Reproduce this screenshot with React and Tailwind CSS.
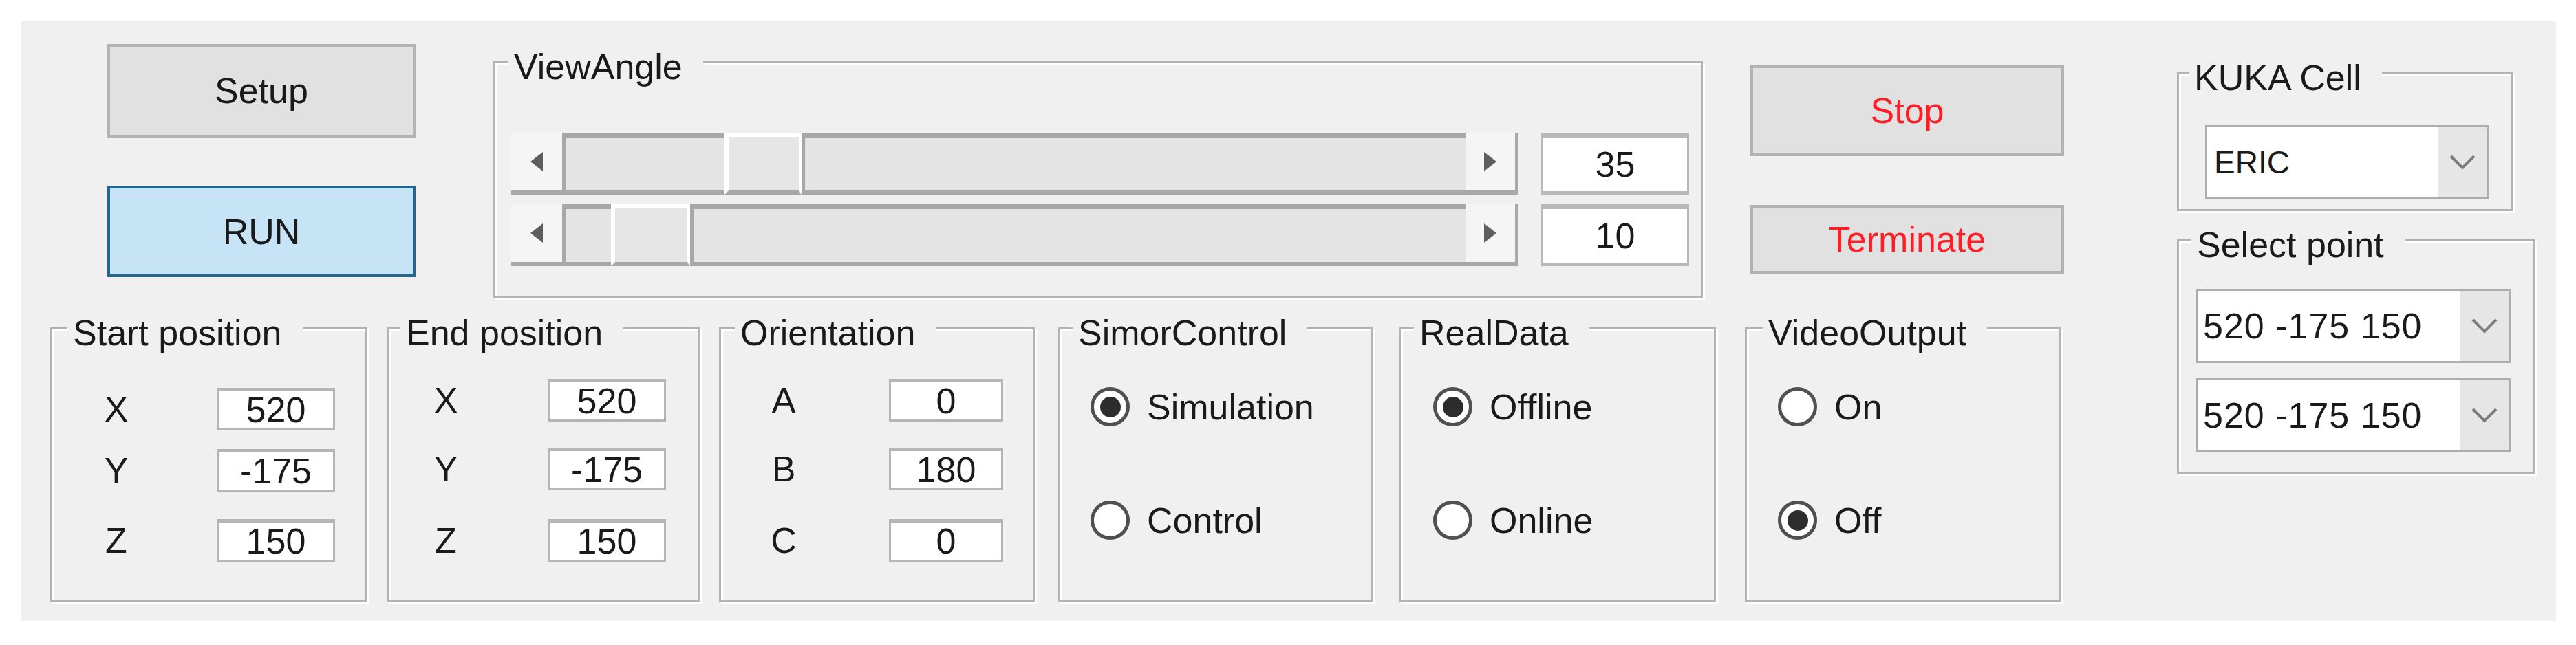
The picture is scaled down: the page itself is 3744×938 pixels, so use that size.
const font = "font-['Liberation_Sans',Arial,sans-serif]";

function Legend({ children, ml = 'ml-[18px]' }) {
  return (
    <legend className={`${ml} pl-[8px] pr-[30px] pt-[14px] leading-[60px] bg-[#f0f0f0] whitespace-nowrap`}>
      {children}
    </legend>
  );
}

function Group({ title, className, legendMl, children }) {
  return (
    <fieldset
      className={`shrink-0 border-[3px] border-[#b3b3b3] shadow-[inset_3px_3px_0_#ffffff,3px_3px_0_#ffffff] ${className}`}
    >
      <Legend ml={legendMl}>{title}</Legend>
      {children}
    </fieldset>
  );
}

function Button({ children, className, textClass = 'text-[#1a1a1a]' }) {
  return (
    <div className={`flex items-center justify-center ${className} ${textClass}`}>{children}</div>
  );
}

function Field({ value, w }) {
  return (
    <div className={`${w} h-[62px] bg-white border-[3px] border-t-[5px] border-[#b5b5b5] flex items-center justify-center`}>
      {value}
    </div>
  );
}

function Radio({ checked, label }) {
  return (
    <div className="flex items-center h-[57px]">
      <span className="w-[57px] h-[57px] rounded-full border-[5px] border-[#505050] bg-white flex items-center justify-center">
        {checked && <span className="w-[30px] h-[30px] rounded-full bg-[#2d2d2d]" />}
      </span>
      <span className="ml-[25px]">{label}</span>
    </div>
  );
}

function Chevron() {
  return (
    <svg width="42" height="26" viewBox="0 0 42 26" aria-hidden="true">
      <polyline points="4,4 21,21 38,4" fill="none" stroke="#7d7d7d" strokeWidth="4" />
    </svg>
  );
}

function Combo({ value, className, textClass }) {
  return (
    <div className={`flex border-[3px] border-[#adadad] bg-white h-[108px] ${className}`}>
      <div className={`flex-1 flex items-center ${textClass}`}>{value}</div>
      <div className="w-[72px] bg-[#e6e6e6] flex items-center justify-center">
        <Chevron />
      </div>
    </div>
  );
}

function ScrollBar({ preW, thumbW }) {
  return (
    <div className="flex h-[90px] w-[1464px]">
      <div className="w-[75px] bg-[#f5f5f5] border-b-[6px] border-[#a8a8a8] flex items-center justify-center">
        <span className="w-0 h-0 border-y-[14px] border-y-transparent border-r-[18px] border-r-[#5e5e5e]" />
      </div>
      <div className={`${preW} bg-[#e4e4e4] border-l-[5px] border-t-[7px] border-b-[6px] border-[#a8a8a8]`} />
      <div className={`${thumbW} bg-[#e6e6e6] border-t-[6px] border-l-[6px] border-r-[4px] border-white border-b-[6px] border-b-[#a8a8a8]`} />
      <div className="flex-1 bg-[#e4e4e4] border-l-[5px] border-t-[7px] border-b-[6px] border-[#a8a8a8]" />
      <div className="w-[76px] bg-[#f5f5f5] border-b-[6px] border-r-[4px] border-[#a8a8a8] flex items-center justify-center">
        <span className="w-0 h-0 border-y-[14px] border-y-transparent border-l-[18px] border-l-[#5e5e5e]" />
      </div>
    </div>
  );
}

function SliderRow({ preW, thumbW, value, className }) {
  return (
    <div className={`flex items-center ${className}`}>
      <ScrollBar preW={preW} thumbW={thumbW} />
      <div className="ml-[34px] w-[215px] h-[90px] bg-white border-x-[3px] border-t-[7px] border-b-[5px] border-[#b8b8b8] flex items-center justify-center">
        {value}
      </div>
    </div>
  );
}

function CoordGroup({ title, className, legendMl, labelMl, boxMl, boxW, rows }) {
  return (
    <Group title={title} className={className} legendMl={legendMl}>
      {rows.map(([label, value, mt]) => (
        <div key={label} className={`flex items-center ${mt}`}>
          <span className={`${labelMl} w-[40px] text-center`}>{label}</span>
          <div className={boxMl}>
            <Field value={value} w={boxW} />
          </div>
        </div>
      ))}
    </Group>
  );
}

function RadioGroup({ title, className, legendMl, radioMl, options }) {
  return (
    <Group title={title} className={className} legendMl={legendMl}>
      <div className={`flex flex-col ${radioMl} mt-[49px] gap-[108px]`}>
        {options.map(([label, checked]) => (
          <Radio key={label} label={label} checked={checked} />
        ))}
      </div>
    </Group>
  );
}

export default function App() {
  return (
    <div className={`w-[3744px] h-[938px] bg-white pt-[31px] pl-[31px] ${font} text-[52px] leading-none text-[#1a1a1a]`}>
      <div className="w-[3684px] h-[872px] bg-[#f0f0f0] flex">
        {/* main area */}
        <div className="w-[2969px] shrink-0 flex flex-col">
          <div className="flex items-start h-[409px]">
            <div className="ml-[125px] mt-[33px] w-[448px] flex flex-col">
              <Button className="h-[136px] bg-[#e1e1e1] border-[4px] border-[#b3b3b3]">Setup</Button>
              <Button className="mt-[70px] h-[133px] bg-[#c7e4f7] border-[4px] border-[#24668f]">RUN</Button>
            </div>

            <Group title="ViewAngle" className="ml-[112px] mt-[22px] w-[1759px] h-[381px]" legendMl="ml-[20px]">
              <div className="pl-[23px]">
                <SliderRow className="mt-[66px]" preW="w-[236px]" thumbW="w-[112px]" value="35" />
                <SliderRow className="mt-[14px]" preW="w-[71px]" thumbW="w-[115px]" value="10" />
              </div>
            </Group>

            <div className="ml-[69px] mt-[64px] w-[456px] flex flex-col">
              <Button className="h-[132px] bg-[#e1e1e1] border-[4px] border-[#b3b3b3]" textClass="text-[#ff1e26]">
                Stop
              </Button>
              <Button className="mt-[71px] h-[100px] bg-[#e1e1e1] border-[4px] border-[#b3b3b3]" textClass="text-[#ff1e26]">
                Terminate
              </Button>
            </div>
          </div>

          <div className="flex items-start">
            <CoordGroup
              title="Start position"
              className="ml-[42px] w-[461px] h-[435px]"
              legendMl="ml-[22px]"
              labelMl="ml-[73px]"
              boxMl="ml-[126px]"
              boxW="w-[172px]"
              rows={[
                ['X', '520', 'mt-[50px]'],
                ['Y', '-175', 'mt-[27px]'],
                ['Z', '150', 'mt-[40px]'],
              ]}
            />
            <CoordGroup
              title="End position"
              className="ml-[28px] w-[456px] h-[435px]"
              legendMl="ml-[17px]"
              labelMl="ml-[63px]"
              boxMl="ml-[128px]"
              boxW="w-[172px]"
              rows={[
                ['X', '520', 'mt-[37px]'],
                ['Y', '-175', 'mt-[38px]'],
                ['Z', '150', 'mt-[42px]'],
              ]}
            />
            <CoordGroup
              title="Orientation"
              className="ml-[27px] w-[459px] h-[435px]"
              legendMl="ml-[20px]"
              labelMl="ml-[71px]"
              boxMl="ml-[133px]"
              boxW="w-[166px]"
              rows={[
                ['A', '0', 'mt-[37px]'],
                ['B', '180', 'mt-[38px]'],
                ['C', '0', 'mt-[42px]'],
              ]}
            />
            <RadioGroup
              title="SimorControl"
              className="ml-[34px] w-[457px] h-[435px]"
              legendMl="ml-[18px]"
              radioMl="ml-[44px]"
              options={[
                ['Simulation', true],
                ['Control', false],
              ]}
            />
            <RadioGroup
              title="RealData"
              className="ml-[38px] w-[461px] h-[435px]"
              legendMl="ml-[19px]"
              radioMl="ml-[47px]"
              options={[
                ['Offline', true],
                ['Online', false],
              ]}
            />
            <RadioGroup
              title="VideoOutput"
              className="ml-[42px] w-[459px] h-[435px]"
              legendMl="ml-[23px]"
              radioMl="ml-[45px]"
              options={[
                ['On', false],
                ['Off', true],
              ]}
            />
          </div>
        </div>

        {/* right column */}
        <div className="ml-[164px] flex flex-col">
          <Group title="KUKA Cell" className="mt-[38px] w-[489px] h-[238px]" legendMl="ml-[14px]">
            <Combo value="ERIC" className="mt-[39px] ml-[38px] w-[413px]" textClass="pl-[10px] text-[46px]" />
          </Group>
          <Group title="Select point" className="mt-[5px] w-[520px] h-[377px]" legendMl="ml-[18px]">
            <Combo value="520 -175 150" className="mt-[34px] ml-[25px] w-[458px]" textClass="pl-[7px] tracking-[1px]" />
            <Combo value="520 -175 150" className="mt-[22px] ml-[25px] w-[458px]" textClass="pl-[7px] tracking-[1px]" />
          </Group>
        </div>
      </div>
    </div>
  );
}
